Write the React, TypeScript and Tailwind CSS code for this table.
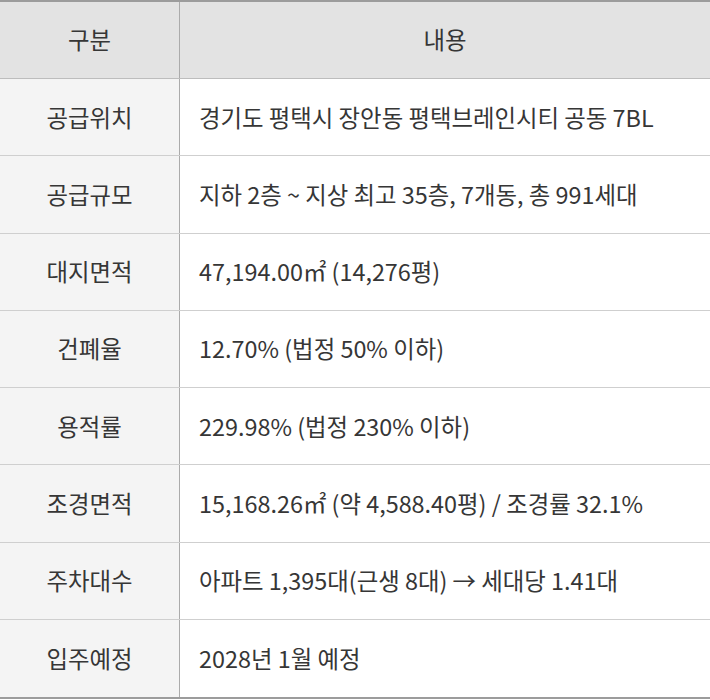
const rows: [string, React.ReactNode][] = [
  ['공급위치', '경기도 평택시 장안동 평택브레인시티 공동 7BL'],
  ['공급규모', '지하 2층 ~ 지상 최고 35층, 7개동, 총 991세대'],
  ['대지면적', '47,194.00㎡ (14,276평)'],
  ['건폐율', '12.70% (법정 50% 이하)'],
  ['용적률', '229.98% (법정 230% 이하)'],
  ['조경면적', '15,168.26㎡ (약 4,588.40평) / 조경률 32.1%'],
  ['주차대수', '아파트 1,395대(근생 8대) → 세대당 1.41대'],
  ['입주예정', '2028년 1월 예정'],
]

export default function App() {
  return (
    <div
      className="w-[710px] bg-white text-[23.4px] text-[#363636]"
      style={{ fontFamily: '"Noto Sans CJK KR", "Noto Sans", sans-serif' }}
    >
      <div className="border-t-2 border-b-2 border-[#9c9c9c]">
        <div className="grid grid-cols-[180px_1fr] h-[77px] bg-[#e3e3e3] border-b border-[#bdbdbd]">
          <div className="flex items-center justify-center border-r border-[#ababab]">구분</div>
          <div className="flex items-center justify-center">내용</div>
        </div>
        {rows.map(([label, value], i) => (
          <div
            key={label}
            className={`grid grid-cols-[180px_1fr] h-[77.25px] ${
              i < rows.length - 1 ? 'border-b border-[#cfcfcf]' : ''
            }`}
          >
            <div className="flex items-center justify-center bg-[#f4f4f4] border-r border-[#ababab]">
              {label}
            </div>
            <div className="flex items-center pl-[19px]">{value}</div>
          </div>
        ))}
      </div>
    </div>
  )
}
